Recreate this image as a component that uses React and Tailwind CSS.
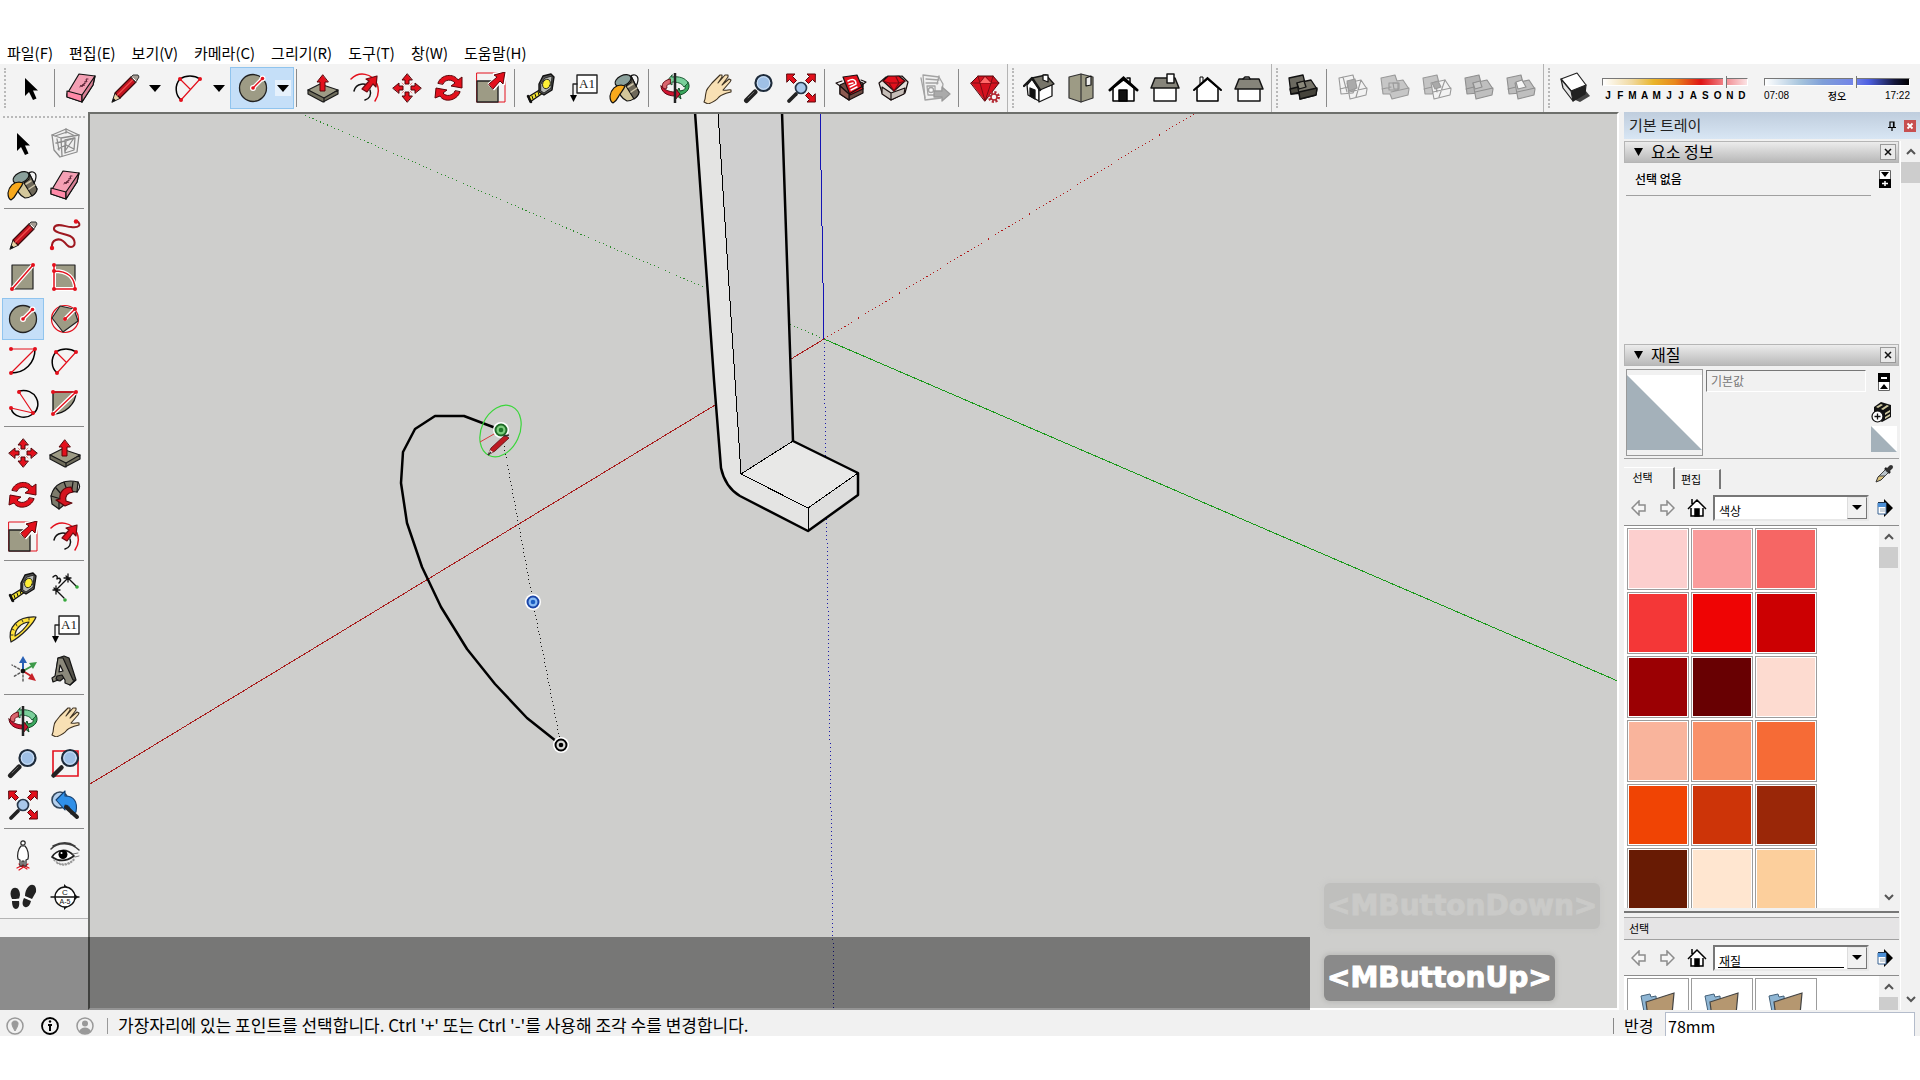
import React from "react";

const RED = "#e3101c";
const TAUPE = "#9d9b85";

function Icon({ children, size = "size-8" }) {
  return (
    <svg viewBox="0 0 32 32" className={`${size} shrink-0`} fill="none" strokeLinecap="round" strokeLinejoin="round" aria-hidden="true">
      {children}
    </svg>
  );
}

const Dot = ({ x, y, r = 2 }) => <circle cx={x} cy={y} r={r} fill={RED} />;

const icons = {
  select: (
    <path d="M10 6v18l4-4 4 8 3.5-1.5-3.5-8h5z" fill="#000" />
  ),
  eraser: (
    <g stroke="#111" strokeWidth="1.2">
      <path d="M2 22 14 2l16 2-2 9-11 17-15-5z" fill="#f4a0b4" />
      <path d="m2 19 15 4 0 7-15-5z" fill="#ff8aa8" />
      <path d="m17 23 13-19-2 9-11 17z" fill="#d88095" />
      <path d="m15 15 1-2 1 2 1-3 1 2 0-3 1 1 0-3 2 1-1-3 2 0" stroke="#5c2536" strokeWidth="1" />
    </g>
  ),
  pencil: (
    <g>
      <path d="m3 30 3-9 5 5z" fill="#e8d3a4" stroke="#222" strokeWidth="1" />
      <path d="m3 30 1.500-4 2.500 2.500z" fill="#111" />
      <path d="M6 21 22 5l5 5-16 16z" fill="#c3131f" stroke="#3a0a0c" strokeWidth="1.200" />
      <path d="M8.500 23 24.500 7" stroke="#ee4b4b" strokeWidth="1.400" />
      <path d="m22 5 2-2 5 0 1 2-3 5z" fill="#a59c93" stroke="#333" strokeWidth="1" />
      <path d="m24 6 3 3" stroke="#fff" strokeWidth="1" />
    </g>
  ),
  arc: (
    <g>
      <path d="M8 28A15 15 0 0 1 7 7 16 14 0 0 1 27 7" stroke="#000" strokeWidth="1.500" />
      <path d="m7 7 10 10M8 28 27 7" stroke={RED} strokeWidth="1.200" />
      <Dot x={7} y={7} /><Dot x={27} y={7} /><Dot x={8} y={28} />
    </g>
  ),
  circle: (
    <g>
      <circle cx="16" cy="16" r="13.500" fill={TAUPE} stroke="#222" strokeWidth="1.300" />
      <path d="m16 16 9-9" stroke="#fff" strokeWidth="4" />
      <circle cx="16" cy="16" r="3" fill="#fff" /><circle cx="25.500" cy="6.500" r="3" fill="#fff" />
      <path d="m16 16 9-9" stroke={RED} strokeWidth="1.400" />
      <Dot x={16} y={16} r={1.800} /><Dot x={25.500} y={6.500} r={1.800} />
    </g>
  ),
  pushPull: (
    <g stroke="#1b1b1b" strokeWidth="1.200">
      <path d="m1 18 12-6 18 6-14 9z" fill={TAUPE} />
      <path d="M1 18v4l15 8 15-8v-4l-14 8z" fill="#6f6d5c" />
      <path d="M17 26v4" />
      <path d="M15.500 3 10 10h3v9h5v-9h3z" fill={RED} stroke="#5b0509" strokeWidth="1" />
    </g>
  ),
  offset: (
    <g>
      <path d="M2 7C10-1 23 1 28 12c2 5 2 11-2 17" stroke={RED} strokeWidth="1.500" />
      <path d="M5 19c2-8 12-9 16-3M21 18c2 5-1 9-5 10" stroke="#111" strokeWidth="1.500" />
      <path d="M13 17 20 9l-3-2 11-3-1 11-3-3-6 8z" fill={RED} stroke="#6b0a10" strokeWidth="1.200" />
    </g>
  ),
  move: (
    <g fill={RED} stroke="#4f0508" strokeWidth="1">
      <path d="m16 2-5 6h3v4h4V8h3zM16 30l-5-6h3v-4h4v4h3zM2 16l6-5v3h4v4H8v3zM30 16l-6-5v3h-4v4h4v3z" />
      <path d="m11 11 2 2M21 11l-2 2M11 21l2-2M21 21l-2-2" stroke="#e88" />
    </g>
  ),
  rotate: (
    <g fill={RED} stroke="#5b0509" strokeWidth="1">
      <path d="M5 11C8 2 21 1 25 8l4-3v11l-11-2 4-3c-3-4-10-4-12 1z" />
      <path d="M27 20c-3 9-16 11-20 4l-5 2 1-10 11 2-4 3c3 4 10 3 12-2z" />
    </g>
  ),
  scale: (
    <g>
      <path d="M2 1h28v29H2z" stroke={RED} strokeWidth="1" />
      <path d="M2 9h21v21H2z" fill={TAUPE} stroke="#222" strokeWidth="1.400" />
      <path d="m14 12 8-7-3-3 12-2-2 12-3-3-7 8z" fill={RED} stroke="#fff" strokeWidth="2.500" />
      <path d="m14 12 8-7-3-2 11-3-2 12-3-3-7 8z" fill={RED} stroke="#5b0509" strokeWidth="1" />
    </g>
  ),
  tape: (
    <g stroke="#111">
      <path d="m3 25 13-8 2 4-13 9z" fill="#f3e332" strokeWidth="1.200" />
      <path d="m7 24 1 3M10 22l1 3M13 20l1 3" strokeWidth="1" />
      <path d="m3 24 3 6" strokeWidth="2.500" />
      <path d="M14 12 18 4l8-2 3 3-2 13-8 5-5-3z" fill="#555" strokeWidth="1.400" />
      <path d="m16 12 4-6 7-2-1 12-7 5-3-2z" fill="#b9bcb8" strokeWidth=".8" />
      <ellipse cx="21.500" cy="12" rx="3.800" ry="4.800" fill="#fff036" strokeWidth=".8" transform="rotate(20 21.500 12)" />
    </g>
  ),
  label: (
    <g>
      <path d="M10 3h20v18H10z" fill="#fff" stroke="#222" strokeWidth="1.400" />
      <path d="M10 12H6v12" stroke="#222" strokeWidth="1.300" />
      <path d="M3 23h7l-3.500 7z" fill="#000" />
      <text x="20" y="16" textAnchor="middle" fontSize="13" fill="#222" fontFamily="Liberation Serif, serif">A1</text>
    </g>
  ),
  bucket: (
    <g stroke="#111" strokeWidth="1.200">
      <path d="M21 5c3-4 8-2 8 2 0 4-1 6-3 8" strokeWidth="1.200" />
      <path d="M7 12 22 4l8 16c-1 5-7 9-12 9-5-2-9-9-11-17z" fill="#d3c79b" />
      <path d="m22 4 8 16c0 3-2 5-5 7l-8-13 5-4z" fill="#6e6859" />
      <path d="m19 15 5-3M22 20l6-4" stroke="#cfc6aa" strokeWidth="1.500" />
      <ellipse cx="14" cy="8.500" rx="8.500" ry="5" fill="#8aa09b" transform="rotate(-26 14 8.500)" />
      <path d="M12 13C7 13 2 17 1 24c0 3 1 6 3 7 4-2 5-6 7-9 2-3 4-5 5-8z" fill="#f8a91c" />
    </g>
  ),
  orbit: (
    <g strokeWidth="1">
      <path d="M29 10c3 5 0 11-8 13l1 4-6-5 4-6 1 3c6-1 6-3 4-7z" fill="#3aa85d" stroke="#114a26" />
      <path d="M13 5c7-1 14 1 16 6l-4 4c-2-4-7-5-12-5l0 3-5-4 5-6z" fill="#79cf9a" stroke="#1d5a35" />
      <path d="M11 7C4 9 2 12 4 18l4-2c-1-3 1-4 3-4z" fill="#d9656d" stroke="#6b1018" />
      <path d="M2 14c0 6 6 10 14 10l0 4 5-6-5-6v4c-6 0-10-2-14-6z" fill="#cf1330" stroke="#5b0912" />
      <path d="M16 1v30" stroke="#222" strokeWidth="2.500" strokeLinecap="butt" />
    </g>
  ),
  pan: (
    <path d="M3 30c3-6 0-10 4-14l4-5 8-8 2 0 0 2-4 6L24 3l3 0 0 2-6 8 7-6 2 1-1 2-7 8c3 1 7-1 8 0l0 2c-4 1-9 2-12 5-3 4-8 6-11 7z" fill="#f8e0b4" stroke="#3c3020" strokeWidth="1.100" />
  ),
  zoom: (
    <g>
      <path d="M3.500 28.500 12 20" stroke="#222" strokeWidth="5" />
      <path d="m5 26 6-6" stroke="#666" strokeWidth="1" />
      <circle cx="20.500" cy="11" r="8" fill="#9fc0e6" stroke="#1e2b3a" strokeWidth="2.200" />
      <circle cx="20.500" cy="11" r="6.200" stroke="#cfe0f5" strokeWidth="1" />
    </g>
  ),
  extents: (
    <g>
      <path d="M4 29 11 22" stroke="#222" strokeWidth="3.800" />
      <circle cx="16" cy="16" r="5.500" fill="#a9c8ea" stroke="#27374a" strokeWidth="1.700" />
      <g fill={RED} stroke="#5b0509" strokeWidth="1">
        <path d="M2 2h8L7.500 4.500l4 4-3 3-4-4L2 10zM30 2h-8l2.500 2.500-4 4 3 3 4-4L30 10zM30 30h-8l2.500-2.500-4-4 3-3 4 4L30 22z" />
      </g>
    </g>
  ),
  warehouse: (
    <g stroke="#1a1010" strokeWidth="1.200">
      <path d="m5 13 13-6 10 4v10l-14 7-9-6z" fill="#6d4a42" />
      <path d="m8 5 14-2 6 14-13 6z" fill={RED} />
      <path d="M13 9c5-3 8-1 8 3l-6 3M14 12l4-1M16 18l6-3" stroke="#fff" strokeWidth="1.500" />
      <path d="m5 14-4-3 6-2M27 13l4-3-5-2M14 28v-6l-9-8M14 22l14-8" />
      <path d="m5 14 9 8v6l-9-6z" fill="#8c5a51" />
    </g>
  ),
  extensionStore: (
    <g stroke="#1a1010" strokeWidth="1.200">
      <path d="m2 11 7-6 16-1 6 6-3 11-14 7-9-7z" fill="#e4dfda" />
      <path d="m6 9 5-5 11 0 6 5-11 10z" fill={RED} />
      <path d="m6 9 6 2 10 0 6-2M12 11l5 8 5-8-3-6" stroke="#7d0a12" />
      <path d="m5 15 9 6v7l-9-6zM14 21l14-5-1 6-13 6z" fill="#c6beb8" />
    </g>
  ),
  layoutSend: (
    <g stroke="#a3a3a3" strokeWidth="1.300">
      <path d="m4 3 16 2 4 7-2 14-16 2z" fill="#f0f0f0" />
      <path d="m7 7 13 1M7 11h12M2 6l4 20M20 4l-2 8" />
      <path d="M8 14h8v9H9z" fill="#f8f8f8" /><circle cx="12" cy="18" r="2.500" />
      <path d="M15 19h8v-4l8 7-8 7v-4h-8z" fill="#aaa" stroke="#999" />
    </g>
  ),
  gem: (
    <g>
      <path d="M2 11 9 4h15l6 7-14 18z" fill="#d5121f" stroke="#4e080c" strokeWidth="1" />
      <path d="M2 11h28M9 4l2 7 5 18 6-18 2-7M11 11l5-7 6 7" stroke="#7c0c14" strokeWidth="1" />
      <path d="m11 11 5-6 6 6z" fill="#ff6a6a" />
      <circle cx="25" cy="25" r="4.500" fill="#f3f3f3" stroke="#b22831" strokeWidth="3" strokeDasharray="2 1.500" strokeLinecap="butt" />
      <circle cx="25" cy="25" r="3" stroke="#b22831" strokeWidth="1.500" />
    </g>
  ),
  viewIso: (
    <g stroke="#151515" strokeWidth="1.300">
      <path d="m4 13 5-6 7 10v12l-11-6z" fill="#fff" />
      <path d="m16 17 13-4v11l-13 6z" fill="#fff" />
      <path d="m9 6 14-3 8 9-14 6z" fill="#77756a" />
      <path d="M1 14 9 6l8 12" strokeWidth="2.400" />
      <path d="M20 3h5v7l-5-2z" fill="#fff" />
      <path d="m7 16 5 2v9l-5-3z" fill="#111" />
    </g>
  ),
  viewTop: (
    <g stroke="#333" strokeWidth="1.200">
      <path d="m4 5 12-3 12 3v21l-12 4-12-4z" fill={TAUPE} />
      <path d="M16 2v28" />
      <path d="m21 6 5-2v9l-5 1z" fill="#eee" stroke="#111" />
    </g>
  ),
  viewFront: (
    <g stroke="#000" strokeWidth="1.500">
      <path d="M6 16v13h21V16L16.500 8z" fill="#fff" />
      <path d="M20 6h3v5" />
      <path d="M3 18 16.500 6 30 18" strokeWidth="3" strokeLinejoin="miter" />
      <path d="M12 18h8v11h-8z" fill="#111" />
    </g>
  ),
  viewRight: (
    <g stroke="#151515" strokeWidth="1.500">
      <path d="M5 14h22v15H5z" fill="#fff" />
      <path d="M6 6h20l4 10H2z" fill="#86847a" />
      <path d="M18 2h7v9h-7z" fill="#fff" />
    </g>
  ),
  viewBack: (
    <g stroke="#000" strokeWidth="1.500">
      <path d="M6 16v13h21V16L16.500 7z" fill="#fff" />
      <path d="M9 12V5h3v4" fill="#fff" strokeWidth="1" />
      <path d="M3 18 16.500 6 30 18" strokeWidth="2" strokeLinejoin="miter" />
    </g>
  ),
  viewLeft: (
    <g stroke="#151515" strokeWidth="1.500">
      <path d="M5 16h22v13H5z" fill="#fff" />
      <path d="M6 7h20l4 10H2z" fill="#86847a" />
      <path d="M10 7 12 5h4l1 2" />
    </g>
  ),
  outerShell: (
    <g stroke="#111" strokeWidth="1.300">
      <path d="m2 6 14-3 3 12-3 6-12 1z" fill="#6b6960" />
      <path d="m3 17 12-3v6l-11 2z" fill="#4a483f" />
      <path d="m10 11 14-3 6 9-1 6-16 4z" fill="#77756a" />
      <path d="m12 20 18-4-1 7-16 4z" fill="#45433b" />
      <path d="m10 11 7-2 2 6-7 2z" fill="#8a887a" />
    </g>
  ),
  intersect: (
    <g stroke="#999" strokeWidth="1.100">
      <path d="m2 6 14-3 3 12-3 6-12 1zM3 17l12-3v6M10 11l14-3 6 9-1 6-16 4zM12 20l18-4M6 5l4 15M24 8l-5 17" />
      <path d="m10 9 8-2 2 9-8 3z" fill="#aaa" />
    </g>
  ),
  union: (
    <g stroke="#999" strokeWidth="1.100">
      <path d="m2 6 14-3 2 6 6-1 6 9-1 6-16 4-2-5-7 0z" fill="#c6c6c6" />
      <path d="m3 17 9-2M12 20l18-4M10 11h9v7h-9z" /><path d="m14 11 6 0v6h-5z" />
    </g>
  ),
  subtract: (
    <g stroke="#999" strokeWidth="1.100">
      <path d="m2 6 14-3 3 12-8 7-7 0z" fill="#c4c4c4" />
      <path d="m10 11 14-3 6 9-1 6-16 4z" fill="#f3f3f3" /><path d="M12 20l18-4M3 17l8-2M24 8l-6 17M15 12l1 8" />
      <path d="m11 11 6-2 3 6-6 2z" fill="#aaa" />
    </g>
  ),
  trim: (
    <g stroke="#8f8f8f" strokeWidth="1.100">
      <path d="m2 6 14-3 3 12-3 6-12 1z" fill="#b4b4b4" />
      <path d="m3 17 12-3" />
      <path d="m10 11 14-3 6 9-1 6-16 4z" fill="#bfbfbf" /><path d="M12 20l18-4" />
      <path d="m10 11 7-2 2 6-7 2z" fill="#c8c8c8" />
    </g>
  ),
  split: (
    <g stroke="#8f8f8f" strokeWidth="1.100">
      <path d="m2 6 14-3 3 12-3 6-12 1z" fill="#bdbdbd" />
      <path d="m3 17 12-3" />
      <path d="m10 11 14-3 6 9-1 6-16 4z" fill="#bfbfbf" /><path d="M12 20l18-4" />
      <path d="m11 10 6-2 4 7-8 2z" fill="#f6f6f6" />
    </g>
  ),
  shadows: (
    <g stroke="#222" strokeWidth="1.200">
      <path d="m14 27 12-9 5 6-10 6z" fill="#444" stroke="none" />
      <path d="m12 19 15-6-1 9-12 7z" fill="#222" />
      <path d="m2 7 16-6 9 12-15 6z" fill="#fff" />
      <path d="m2 7 10 12 2 10-10-13z" fill="#e4e4e4" />
    </g>
  ),
  component: (
    <g stroke="#8d8d8d" strokeWidth="1.300">
      <path d="m3 8 14-6 13 6-2 17-17 5-6-7z" fill="#f0f0f0" />
      <path d="m3 8 9 3 18-3M12 11l1 18M6 9l12-4 8 4M17 2v4M8 12l2 11M16 13l10-2-1 12-9 3zM9 22l8-4 8 4M7 16l9-2" />
      <path d="m17 14 8-3-9 13z" />
    </g>
  ),
  freehand: (
    <g>
      <path d="M3 29C2 20 10 19 14 22c5 4 4 6 8 6 5 0 5-8-1-11-7-3-17-3-16-8 2-6 12-1 17-1 8 1 11-2 6-6" stroke="#9e1820" strokeWidth="2" />
      <Dot x={3} y={29} r={2.200} /><Dot x={27} y={2.500} r={2.200} />
    </g>
  ),
  rectangle: (
    <g>
      <path d="M5 4h21v24H5z" fill={TAUPE} stroke="#222" strokeWidth="1.200" />
      <path d="M5 28 26 4" stroke="#fff" strokeWidth="4" />
      <path d="M5 28 26 4" stroke={RED} strokeWidth="1.500" />
      <Dot x={5} y={28} /><Dot x={26} y={4} />
    </g>
  ),
  rotatedRect: (
    <g>
      <path d="M5 4h21v24H5z" fill={TAUPE} stroke="#222" strokeWidth="1.200" />
      <path d="M5 4v24h21C26 17 19 10 5 10" stroke="#fff" strokeWidth="4" />
      <path d="M5 4v24h21C26 17 19 10 5 10" stroke={RED} strokeWidth="1.500" />
      <Dot x={5} y={4} /><Dot x={5} y={28} /><Dot x={26} y={28} /><Dot x={5} y={10} />
    </g>
  ),
  polygon: (
    <g>
      <circle cx="16" cy="16" r="13.500" stroke={RED} strokeWidth="1.200" />
      <path d="m3 15 8-12 14 3 4 12-15 11z" fill={TAUPE} stroke="#222" strokeWidth="1.200" />
      <path d="m16 16 9-9" stroke="#fff" strokeWidth="4" />
      <path d="m16 16 9-9" stroke={RED} strokeWidth="1.400" />
      <Dot x={16} y={16} /><Dot x={26} y={6} />
    </g>
  ),
  arc2: (
    <g>
      <path d="M28 4c0 14-10 24-24 24" stroke="#000" strokeWidth="1.500" />
      <path d="M4 4h24L4 28" stroke={RED} strokeWidth="1.200" />
      <Dot x={4} y={4} /><Dot x={28} y={4} /><Dot x={4} y={28} />
    </g>
  ),
  arc3: (
    <g>
      <path d="M12 4c16-4 25 14 14 23-8 6-20 3-22-6" stroke="#000" strokeWidth="1.500" />
      <path d="m12 5 14 21-22-5" stroke={RED} strokeWidth="1.200" />
      <Dot x={12} y={5} /><Dot x={26} y={26} /><Dot x={4} y={21} />
    </g>
  ),
  pie: (
    <g>
      <path d="M4 5h23c0 12-11 22-23 22z" fill={TAUPE} stroke="#111" strokeWidth="1.300" />
      <path d="M4 27 27 5" stroke="#fff" strokeWidth="4" />
      <path d="M4 5h23L4 27" stroke={RED} strokeWidth="1.400" />
      <Dot x={4} y={5} /><Dot x={27} y={5} /><Dot x={4} y={27} />
    </g>
  ),
  followMe: (
    <g stroke="#161616" strokeWidth="1.200">
      <path d="M29 3C17 0 5 4 2 17l1 8 7 5 5-4-2-7c2-6 9-7 15-6z" fill="#7d7b6c" />
      <path d="M29 3c2 3 2 7-1 10M24 3l-1 7M15 3l3 8M7 9l6 7M2 17l10 3M10 30l0-7" />
      <path d="M22 8c-7 0-12 5-11 12l-4 1 9 6 7-3-6-2c-1-5 1-8 7-9z" fill="#d4141f" stroke="#5b0509" />
    </g>
  ),
  dimension: (
    <g stroke="#111" strokeWidth="1.300">
      <path d="M7 19 19 7M7 19l8 8M19 7l8 8M4 19h7M7 15v8M15 7h7M19 3v8M5 17l5 5M17 5l5 5" />
      <path d="M4 6c3-3 5-1 4 2 3-2 5 1 2 4" strokeWidth="1.500" />
      <circle cx="16" cy="29" r="1.800" fill="#35a83b" stroke="none" /><circle cx="28" cy="16" r="1.800" fill="#35a83b" stroke="none" />
    </g>
  ),
  protractor: (
    <g stroke="#222" strokeWidth="1.200">
      <path d="M4 29C0 14 11 3 29 4c-2 6-14 19-25 25z" fill="#ffe23a" />
      <path d="M8 23c0-7 6-13 14-14-3 5-9 11-14 14z" fill="#f3f3f3" />
      <path d="m4 22 2 0M5 16l2 1M9 11l1 2M15 7l1 2M22 5v2" strokeWidth=".9" />
    </g>
  ),
  axes: (
    <g>
      <path d="M16 16v11M16 16 5 10M16 16 6 22" stroke="#555" strokeWidth="1.400" strokeDasharray="2 2" />
      <path d="M16 16V6" stroke="#2860b5" strokeWidth="2" /><path d="m12 8 4-7 4 7z" fill="#2860b5" />
      <path d="m16 16 9-5" stroke="#3d9a49" strokeWidth="2" /><path d="m22 8 8-1-4 7z" fill="#3d9a49" />
      <path d="m16 16 8 5" stroke="#c72128" strokeWidth="2" /><path d="m25 18 4 8-8-2z" fill="#c72128" />
      <circle cx="16" cy="16" r="2.300" fill="#111" />
    </g>
  ),
  text3d: (
    <g stroke="#151515" strokeWidth="1.200">
      <path d="m9 3 6-2 5 2 7 22-6 5-5-8-5 4-5-1z" fill="#55534a" />
      <path d="m3 23 3-2 3-18 5 0 10 22 2 0-5 5-5-2 0-3-3-5-5 1-1 3 2 1-5 2z" fill="#8b897b" />
      <path d="m11 10 3 6-4 1z" fill="#f3f3f3" />
    </g>
  ),
  zoomWindow: (
    <g>
      <path d="M4 4h25v25H4z" stroke={RED} strokeWidth="1.600" strokeLinejoin="miter" />
      <path d="m4.500 28.500 8-8" stroke="#222" strokeWidth="4.500" />
      <circle cx="21" cy="11" r="8" fill="#9fc0e6" stroke="#1e2b3a" strokeWidth="2.200" />
      <circle cx="21" cy="11" r="6.200" stroke="#cfe0f5" strokeWidth="1" />
    </g>
  ),
  previous: (
    <g>
      <circle cx="11" cy="11" r="8" fill="#b4d0ee" stroke="#33475c" strokeWidth="1.600" />
      <path d="m7 11 9-9v5c9 0 13 6 11 16l-5 2c-1-7-2-9-6-9v5z" fill="#3090e8" stroke="#123f70" strokeWidth="1.100" />
      <path d="m17 18 11 10" stroke="#222" strokeWidth="4" />
    </g>
  ),
  position: (
    <g>
      <path d="m10 29 6-3 6 3M12 25l8 5M21 25l-9 6" stroke={RED} strokeWidth="1.200" />
      <path d="M14 7c-3 3-4 9-3 13l2 1v6h2v-5h2v5h2v-6l2-1c1-4 0-10-3-13z" fill="#fff" stroke="#222" strokeWidth="1.200" />
      <circle cx="16" cy="4" r="2.200" fill="#fff" stroke="#222" strokeWidth="1.200" />
    </g>
  ),
  lookAround: (
    <g>
      <path d="M2 10C9 3 22 3 30 11M4 7c8-4 16-4 22 0" stroke="#3b3b3b" strokeWidth="1.500" />
      <path d="M3 18c5-8 15-9 22-1-7 5-15 6-22 1z" fill="#fff" stroke="#222" strokeWidth="1.700" />
      <circle cx="14" cy="15.500" r="4.500" fill="#000" /><circle cx="12.500" cy="14" r="1" fill="#fff" />
      <path d="M5 21c6 6 14 5 20-1M8 24c5 3 11 3 17-3" stroke="#999" strokeWidth="1.500" strokeDasharray="1 2" />
      <path d="M26 18l4-1M24 15l5-1" stroke="#777" />
    </g>
  ),
  walk: (
    <g fill="#222">
      <path d="M5 8c4-3 8 0 8 6l-1 4H5C3 14 3 11 5 8zM5 20h7c1 5-1 8-3 8-3 0-4-4-4-8z" />
      <path d="M22 5c4-3 8 0 7 6l-4 7-7-3c0-4 1-7 4-10zM17 17l7 3c-1 5-4 7-6 6-3-1-3-5-1-9z" />
      <path d="m5 19 7-1M17 16l8 3" stroke="#fff" />
    </g>
  ),
  section: (
    <g>
      <path d="m15 3 14 13-14 13" fill="#111" />
      <circle cx="16" cy="16" r="10" fill="#fff" stroke="#111" strokeWidth="1.400" />
      <path d="M2 16h28" stroke="#111" strokeWidth="1.400" />
      <text x="16" y="14" textAnchor="middle" fontSize="8" fill="#111" fontFamily="Liberation Sans, sans-serif">C</text>
      <text x="16" y="23" textAnchor="middle" fontSize="7" fill="#111" fontFamily="Liberation Sans, sans-serif">A-5</text>
    </g>
  ),
};

const menu = ["파일(F)", "편집(E)", "보기(V)", "카메라(C)", "그리기(R)", "도구(T)", "창(W)", "도움말(H)"];

function Tool({ name, active }) {
  return (
    <button
      type="button"
      aria-label={name}
      className={`grid size-[42px] shrink-0 place-items-center border ${active ? "border-[#90c4ee] bg-[#c5dff8]" : "border-transparent"}`}
    >
      <Icon>{icons[name]}</Icon>
    </button>
  );
}

function SplitTool({ name, active }) {
  return (
    <div className={`flex w-16 shrink-0 items-center border ${active ? "border-[#90c4ee] bg-[#c5dff8]" : "border-transparent"}`}>
      <button type="button" aria-label={name} className="grid h-10 w-11 place-items-center">
        <Icon>{icons[name]}</Icon>
      </button>
      <button type="button" aria-label={`${name} options`} className={`grid h-4 w-4 place-items-center ${active ? "bg-[#e6f1fc]" : ""}`}>
        <svg viewBox="0 0 12 7" className="h-[7px] w-3" aria-hidden="true"><path d="M0 0h12L6 7z" /></svg>
      </button>
    </div>
  );
}

const Sep = () => <div className="mr-[5px] ml-[2px] h-[38px] w-px shrink-0 bg-[#8a8a8a]" />;
const RowSep = () => <div className="mt-[2px] mr-[2px] mb-[5px] ml-[2px] h-px bg-[#8a8a8a]" />;
const Grip = () => <div className="mx-1 h-10 w-0 shrink-0 border-l-2 border-dotted border-[#b9b9b9]" />;

const GroupEnd = () => (
  <div className="flex h-full w-3 shrink-0 items-center pl-px">
    <div className="h-full w-px bg-[#b4b4b4]" />
    <Grip />
  </div>
);

const range =
  "block h-2 w-full appearance-none border border-t-[#777] border-r-white border-b-white border-l-[#777] [&::-webkit-slider-thumb]:h-3 [&::-webkit-slider-thumb]:w-1 [&::-webkit-slider-thumb]:appearance-none [&::-webkit-slider-thumb]:border-r [&::-webkit-slider-thumb]:border-[#777] [&::-webkit-slider-thumb]:bg-[#f3f3f3]";

function MainToolbar() {
  return (
    <div className="flex h-12 items-center overflow-hidden bg-[#f3f3f3]" role="toolbar">
      <div className="w-[10px] shrink-0"><Grip /></div>
      <Tool name="select" />
      <Sep />
      <Tool name="eraser" />
      <SplitTool name="pencil" />
      <SplitTool name="arc" />
      <SplitTool name="circle" active />
      <Sep />
      {["pushPull", "offset", "move", "rotate", "scale"].map((n) => <Tool key={n} name={n} />)}
      <Sep />
      {["tape", "label", "bucket"].map((n) => <Tool key={n} name={n} />)}
      <Sep />
      {["orbit", "pan", "zoom", "extents"].map((n) => <Tool key={n} name={n} />)}
      <Sep />
      {["warehouse", "extensionStore", "layoutSend"].map((n) => <Tool key={n} name={n} />)}
      <Sep />
      <Tool name="gem" />
      <GroupEnd />
      {["viewIso", "viewTop", "viewFront", "viewRight", "viewBack", "viewLeft"].map((n) => <Tool key={n} name={n} />)}
      <GroupEnd />
      <Tool name="outerShell" />
      <Sep />
      {["intersect", "union", "subtract", "trim", "split"].map((n) => <Tool key={n} name={n} />)}
      <GroupEnd />
      <Tool name="shadows" />
      <div className="flex min-w-0 flex-1 gap-4 pt-1 pr-[10px] pl-[6px] font-['Liberation_Sans',sans-serif] text-[10px] leading-3 text-black">
        <div className="flex-1">
          <input type="range" aria-label="날짜" min="0" max="100" defaultValue="86" className={`${range} bg-[linear-gradient(90deg,#fff,#f0d9a0_20%,#e9b52a_35%,#e8871c_50%,#df1414_68%,#f0848a_84%,#fbe3e4)]`} />
          <div className="mt-1 grid grid-cols-12 text-center font-bold">
            {"JFMAMJJASOND".split("").map((m, i) => <span key={i}>{m}</span>)}
          </div>
        </div>
        <div className="flex-1">
          <input type="range" aria-label="시간" min="0" max="100" defaultValue="63" className={`${range} bg-[linear-gradient(90deg,#fff,#a5c3dc_25%,#7f9fd8_40%,#7283e8_62%,#4d5fe0_72%,#15183c_90%,#000)]`} />
          <div className="mt-1 flex justify-between">
            <span>07:08</span>
            <span className="font-['Noto_Sans_CJK_KR',sans-serif] font-medium">정오</span>
            <span>17:22</span>
          </div>
        </div>
      </div>
    </div>
  );
}

const palette = [
  [["select", "component"], ["bucket", "eraser"]],
  [["pencil", "freehand"], ["rectangle", "rotatedRect"], ["circle", "polygon"], ["arc2", "arc"], ["arc3", "pie"]],
  [["move", "pushPull"], ["rotate", "followMe"], ["scale", "offset"]],
  [["tape", "dimension"], ["protractor", "label"], ["axes", "text3d"]],
  [["orbit", "pan"], ["zoom", "zoomWindow"], ["extents", "previous"]],
  [["position", "lookAround"], ["walk", "section"]],
];

function SideToolbar() {
  return (
    <div className="w-[88px] shrink-0 bg-[#f1f1f1]" role="toolbar">
      <div className="border-b border-[#b4b4b4] bg-[#f4f4f4] px-[2px]">
        <div className="flex h-[10px] items-center px-px">
          <div className="h-0 w-full border-t-2 border-dotted border-[#b9b9b9]" />
        </div>
        {palette.map((group, g) => (
          <div key={g}>
            {g > 0 && <RowSep />}
            <div className="grid grid-cols-[42px_42px]">
              {group.flat().map((n) => <Tool key={n} name={n} active={n === "circle"} />)}
            </div>
          </div>
        ))}
      </div>
    </div>
  );
}

function Snap({ x, y, ring, fill, core }) {
  return (
    <g>
      <circle cx={x} cy={y} r="8" fill="#fff" />
      <circle cx={x} cy={y} r="5.500" fill={fill} stroke={ring} strokeWidth="2" />
      <circle cx={x} cy={y} r="2.300" fill={core} />
    </g>
  );
}

function Viewport() {
  return (
    <div className="min-w-0 flex-1 border-2 border-t-[#6d6f6b] border-r-white border-b-white border-l-[#6d6f6b] bg-[#cececc]">
      <svg viewBox="90 114 1527 894" preserveAspectRatio="xMidYMid slice" className="block h-full w-full" fill="none" role="img" aria-label="3D 모델">
        <g strokeWidth="1" shapeRendering="crispEdges">
          <path d="M824 339 1194 114" stroke="#b01818" strokeDasharray="1 3" />
          <path d="M824 339 302 114" stroke="#2b8a2b" strokeDasharray="1 3" />
          <path d="M824 339 834 1010" stroke="#1b1ba8" strokeDasharray="1 3" />
          <path d="M824 339 90 784" stroke="#a81c1c" />
          <path d="m824 339 796 343" stroke="#1a9a1a" />
          <path d="m820 112 4 227" stroke="#1414b4" />
        </g>
        <path d="M695 112 714 380l7 88c3 14 9 22 19 28l68 35 50-36v-22l-65-32-2-61-9-268z" fill="#e4e4e3" />
        <path d="M718 112 735 380l6 94 52-33-2-61-9-268z" fill="#cfcfcf" />
        <path d="m741 474 52-33 65 32-50 35z" fill="#e8e8e7" />
        <path d="m808 508 50-35v22l-50 36z" fill="#dededd" />
        <path d="M718 112 735 380l6 94 67 34v23M741 474l52-33M808 508l50-35" stroke="#000" strokeWidth="1" shapeRendering="crispEdges" />
        <path d="M695 112 714 380l7 88c3 14 9 22 19 28l68 35 50-36v-22l-65-32-2-61-9-268" stroke="#000" strokeWidth="2.500" strokeLinejoin="round" />
        <path d="m501 430 32 172 28 143" stroke="#111" strokeDasharray="1 3" strokeWidth="1" shapeRendering="crispEdges" />
        <path d="m501 430-8-3-29-11h-29l-20 13-12 23-2 31 6 40 15 44 19 40 26 42 28 35 32 34 34 27" stroke="#000" strokeWidth="2.500" strokeLinejoin="round" />
        <ellipse cx="500.500" cy="431" rx="19" ry="27" transform="rotate(25 500.500 431)" stroke="#3bd63b" strokeWidth="1.200" />
        <path d="m480 442 21-12" stroke="#d83a3a" />
        <Snap x={501} y={430} ring="#1e6b26" fill="#7fce7f" core="#1e7a2a" />
        <Snap x={533} y={602} ring="#1b46a8" fill="#8abcf5" core="#1d5fc4" />
        <Snap x={561} y={745} ring="#000" fill="#d8d8d6" core="#000" />
        <path d="m488 455 3-7 14-13 4 3-14 13z" fill="#bd1a22" stroke="#551013" strokeWidth=".8" />
        <path d="m488 455 2-5 3 2z" fill="#eee" />
        <path d="m488 455 3-3M504 436l5-1" stroke="#333" strokeWidth="1.500" />
      </svg>
    </div>
  );
}

function Chevron({ up }) {
  return (
    <svg viewBox="0 0 10 7" className="h-[7px] w-[10px]" fill="none" stroke="#555" strokeWidth="2" aria-hidden="true">
      <path d={up ? "m1 6 4-4 4 4" : "m1 1 4 4 4-4"} />
    </svg>
  );
}

function ScrollBar({ thumb = true, down = true, className = "" }) {
  return (
    <div className={`flex shrink-0 flex-col items-center bg-[#f1f1f1] ${className}`}>
      <button type="button" aria-label="위로" className="grid h-[21px] w-full shrink-0 place-items-center"><Chevron up /></button>
      {thumb && <div className="h-[21px] w-full shrink-0 bg-[#cdcdcd]" />}
      <div className="flex-1" />
      {down && <button type="button" aria-label="아래로" className="grid h-[21px] w-full shrink-0 place-items-center"><Chevron /></button>}
    </div>
  );
}

function PanelHeader({ title }) {
  return (
    <div className="flex h-[22px] shrink-0 items-center border border-[#b5b5b5] bg-linear-to-b from-[#ececec] to-[#b9b9b9] pr-[2px] pl-[9px]">
      <svg viewBox="0 0 9 8" className="h-2 w-[9px]" aria-hidden="true"><path d="M0 0h9L4.500 8z" /></svg>
      <h2 className="flex-1 pb-[3px] pl-2 text-base leading-5">{title}</h2>
      <button type="button" aria-label={`${title} 닫기`} className="grid size-4 place-items-center border border-[#999] bg-[#e9e9e9]">
        <svg viewBox="0 0 8 8" className="size-2" stroke="#111" strokeWidth="1.500" aria-hidden="true"><path d="m1 1 6 6M7 1 1 7" /></svg>
      </button>
    </div>
  );
}

const Triangle = () => (
  <svg viewBox="0 0 74 74" preserveAspectRatio="none" className="block h-full w-full" aria-hidden="true">
    <path d="M0 0h74v74H0z" fill="#fff" />
    <path d="M0 0v74h74z" fill="#a4b1ba" />
  </svg>
);

function NavRow({ label, value, underline }) {
  return (
    <div className="flex h-[35px] shrink-0 items-center pl-[7px]">
      <button type="button" aria-label="뒤로" className="mr-3 w-4">
        <svg viewBox="0 0 16 16" className="size-4" fill="#f6f6f6" stroke="#8c8c8c" strokeWidth="1.500"><path d="m1 8 7-7v4h6v6H8v4z" /></svg>
      </button>
      <button type="button" aria-label="앞으로" className="mr-3 w-4">
        <svg viewBox="0 0 16 16" className="size-4" fill="#f6f6f6" stroke="#8c8c8c" strokeWidth="1.500"><path d="M15 8 8 1v4H2v6h6v4z" /></svg>
      </button>
      <button type="button" aria-label="홈" className="mr-[6px] w-5">
        <svg viewBox="0 0 20 20" className="size-5" fill="#fff" stroke="#000" strokeWidth="1.500"><path d="M4 10v8h12v-8M1 11l9-9 9 9M5 6V1" /><path d="M8 11h4v7H8z" fill="#000" /></svg>
      </button>
      <div className="relative h-[26px] w-[156px] border-2 border-t-[#777] border-r-[#e8e8e8] border-b-[#e8e8e8] border-l-[#777] bg-white">
        <select aria-label={label} defaultValue={value} className="h-full w-full appearance-none bg-transparent pb-[3px] pl-1 text-xs leading-4 text-black">
          <option>{value}</option>
        </select>
        {underline && <div className="absolute bottom-px left-[3px] h-px w-[126px] bg-black" />}
        <div className="pointer-events-none absolute top-0 right-0 grid h-full w-5 place-items-center border border-t-[#e8e8e8] border-r-[#777] border-b-[#777] border-l-[#ddd] bg-[#f1f1f1]">
          <svg viewBox="0 0 10 5" className="h-[5px] w-[10px]"><path d="M0 0h10L5 5z" /></svg>
        </div>
      </div>
      <button type="button" aria-label="세부 정보" className="ml-[7px] w-5">
        <svg viewBox="0 0 20 20" className="size-5"><path d="M8 1v3H2v12h6v3l9-9z" fill="#000" /><path d="M2 5h8v11H2z" fill="#fff" stroke="#3b6494" /><path d="M2 5h8v4H2z" fill="#4b8fd6" /><path d="M4 11h5M4 13h5" stroke="#9ab" /></svg>
      </button>
    </div>
  );
}

const swatches = [
  "#fccfce", "#fa9c9c", "#f66664", "#f43737", "#ef0404", "#cc0002",
  "#9b0003", "#680002", "#fddbd0", "#f9b49c", "#f99169", "#f66b36",
  "#f04404", "#cd3408", "#9a2708", "#681b04", "#ffe6d0", "#fccf9c",
];

function Tray() {
  return (
    <aside className="flex w-[301px] shrink-0 flex-col bg-[#f1f1f1] pl-[5px] text-black">
      <div className="flex h-[27px] shrink-0 items-center bg-linear-to-b from-[#bfcddd] to-[#d8e6f4] pl-[5px] pr-1">
        <h1 className="flex-1 pb-[2px] text-[15px] leading-5 text-[#222]">기본 트레이</h1>
        <button type="button" aria-label="고정" className="mr-2">
          <svg viewBox="0 0 8 10" className="h-[10px] w-2" fill="none" stroke="#000" strokeWidth="1.200"><path d="M2 6V1h4v5M0 6.500h8M4 7v3M5.500 1v5" /></svg>
        </button>
        <button type="button" aria-label="닫기" className="grid size-3 place-items-center bg-[#c75050]">
          <svg viewBox="0 0 8 8" className="size-2" stroke="#fff" strokeWidth="1.800"><path d="m1.500 1.500 5 5M6.500 1.500l-5 5" /></svg>
        </button>
      </div>
      <div className="flex min-h-0 flex-1 pt-[2px]">
        <div className="flex w-[275px] shrink-0 flex-col overflow-hidden">
          <section className="h-[203px] shrink-0">
            <PanelHeader title="요소 정보" />
            <div className="flex h-8 items-center justify-between pr-2 pl-[11px]">
              <p className="text-xs font-medium">선택 없음</p>
              <svg viewBox="0 0 12 18" className="h-[18px] w-3" aria-hidden="true"><path d="M.5.500h11v17H.5z" fill="#fff" stroke="#666" /><path d="M2 2h8L6 7zM0 9h12v9H0z" /><path d="M3 13.500h6M6 11v5" stroke="#fff" strokeWidth="1.500" /></svg>
            </div>
            <div className="mr-7 ml-[2px] h-px bg-[#a0a0a0]" />
          </section>
          <section className="flex min-h-0 flex-1 flex-col">
            <PanelHeader title="재질" />
            <div className="flex h-[93px] shrink-0 items-start border-b border-[#a0a0a0] pt-[3px] pl-[2px]">
              <div className="h-[87px] w-[77px] border border-[#999] py-[5px]"><Triangle /></div>
              <input type="text" aria-label="재질 이름" defaultValue="기본값" disabled className="mt-px ml-[3px] h-[22px] w-40 border border-t-[#777] border-r-white border-b-white border-l-[#777] bg-[#f1f1f1] px-1 pb-[2px] text-xs text-[#777]" />
              <div className="flex flex-1 flex-col items-end pt-1 pr-[2px]">
                <svg viewBox="0 0 12 18" className="mr-[7px] h-[18px] w-3" aria-hidden="true"><path d="M.5.500h11v17H.5z" fill="#fff" stroke="#666" /><path d="M0 0h12v9H0zM2 16h8L6 11z" /><path d="M3 5h6" stroke="#fff" strokeWidth="2" /></svg>
                <button type="button" aria-label="재질 만들기" className="mt-[10px] mr-1 size-[22px]">
                  <svg viewBox="0 0 22 22" className="size-full"><path d="m3 6 7-5 10 3v12l-9 5-8-5z" fill="#111" /><path d="m5 6 5-3 2 1-5 3zM10 8l6-4 2 1-6 4zM14 12l5-3v2l-5 3zM14 16l5-3v2l-5 3z" fill="#cfc9a0" /><circle cx="6.500" cy="15.500" r="5.500" fill="#fff" stroke="#111" strokeWidth="1.200" /><path d="M3.500 15.500h6M6.500 12.500v6" stroke="#111" strokeWidth="1.300" /></svg>
                </button>
                <div className="mt-[3px] size-[26px]"><Triangle /></div>
              </div>
            </div>
            <div className="flex h-[31px] shrink-0 items-start pt-2 text-[11px] leading-4">
              <button type="button" className="h-[22px] w-[51px] border-t border-r-2 border-t-white border-r-[#777] pr-3 pb-1">선택</button>
              <button type="button" className="mt-[2px] h-5 w-[46px] border-t border-r-2 border-t-white border-r-[#777] pr-3 pb-[2px]">편집</button>
              <button type="button" aria-label="샘플 페인트" className="mr-1 -mt-1 ml-auto size-5">
                <svg viewBox="0 0 20 20" className="size-5"><path d="m1 19 2-5 8-8 3 3-8 8z" fill="#d9c27e" stroke="#333" /><path d="M4 13l7-7 3 3-4 4z" fill="#b9c3c9" stroke="#444" /><path d="m10 5 5 5" stroke="#222" strokeWidth="2.500" /><path d="m13 7 3-3" stroke="#333" strokeWidth="4" strokeLinecap="round" /></svg>
              </button>
            </div>
            <NavRow label="컬렉션" value="색상" />
            <div className="flex min-h-0 flex-1 border-t border-[#8c8c8c] pr-px">
              <div className="grid flex-1 grid-cols-[repeat(3,62px)] content-start gap-[2px] overflow-hidden bg-white pt-[2px] pl-[3px]">
                {swatches.map((c) => (
                  <button type="button" key={c} aria-label={c} className="size-[62px] border border-[#9c9c9c] bg-white p-px">
                    <span className="block size-full" style={{ backgroundColor: c }} />
                  </button>
                ))}
              </div>
              <ScrollBar className="w-[19px]" />
            </div>
            <div className="mt-[3px] h-[2px] shrink-0 bg-[#777]" />
            <div className="mt-1 flex h-[23px] shrink-0 items-center border-y border-[#a0a0a0] bg-[#e5e4e5] pb-[2px] pl-[5px] text-[11px] leading-4">선택</div>
            <NavRow label="보조 컬렉션" value="재질" underline />
            <div className="flex h-[35px] shrink-0 border-t border-[#8c8c8c] pr-px">
              <div className="grid flex-1 grid-cols-[repeat(3,62px)] content-start gap-[2px] overflow-hidden bg-white pt-[2px] pl-[3px]">
                {[1, 2, 3].map((n) => (
                  <button type="button" key={n} aria-label={`폴더 ${n}`} className="grid size-[62px] place-items-center border border-[#9c9c9c] bg-white">
                    <svg viewBox="0 0 36 34" className="h-[34px] w-9"><path d="m1 4 9-2 1 3 5-1 2 26H6z" fill="#8fb6d4" stroke="#44617a" /><path d="M6 10 34 1l-3 32H9z" fill="#b59770" stroke="#444" strokeWidth="1.200" /></svg>
                  </button>
                ))}
              </div>
              <ScrollBar down={false} className="w-[19px] overflow-hidden" />
            </div>
          </section>
        </div>
        <ScrollBar className="ml-px flex-1 border-l border-white" />
      </div>
    </aside>
  );
}

function KeyCaption({ children, faded }) {
  return (
    <kbd className={`block w-fit rounded-md px-[3px] pt-1 pb-[5px] font-['DejaVu_Sans',sans-serif] text-[28px] leading-[37px] font-bold [-webkit-text-stroke:1px_currentColor] ${faded ? "bg-[#bfbfbd] text-[#cacac8] shadow-[0_0_4px_3px_#cacac8]" : "bg-[#8a8a8a] text-white shadow-[0_0_4px_2px_#bcbcba]"}`}>
      {children}
    </kbd>
  );
}

function StatusBar() {
  return (
    <footer className="flex h-[26px] shrink-0 items-start bg-[#f1f1f1] text-base leading-5 text-black">
      <div className="flex w-[100px] shrink-0 items-center gap-[17px] pt-[7px] pl-[6px]">
        <svg viewBox="0 0 18 18" className="size-[18px]" fill="none" stroke="#999"><circle cx="9" cy="9" r="8" strokeWidth="1.500" /><path d="M9 14c-5-8-3-10 0-10s5 2 0 10z" fill="#999" /></svg>
        <svg viewBox="0 0 18 18" className="size-[18px]" fill="none" stroke="#000"><circle cx="9" cy="9" r="8" strokeWidth="1.800" /><path d="M9 7v7M7 8h4" strokeWidth="2" /><circle cx="9" cy="4.500" r="1.200" fill="#000" stroke="none" /></svg>
        <svg viewBox="0 0 18 18" className="size-[18px]" fill="none" stroke="#999"><circle cx="9" cy="9" r="8" strokeWidth="1.500" /><circle cx="9" cy="6.500" r="3" fill="#999" stroke="none" /><path d="M3 15c1-6 11-6 12 0l-6 2z" fill="#999" stroke="none" /></svg>
      </div>
      <div className="mt-2 mr-[10px] ml-[7px] h-4 w-px shrink-0 bg-[#999]" />
      <p className="min-w-0 flex-1 pt-[5px] text-[17px] leading-5 whitespace-nowrap">가장자리에 있는 포인트를 선택합니다. Ctrl '+' 또는 Ctrl '-'를 사용해 조각 수를 변경합니다.</p>
      <label className="flex shrink-0 items-start">
        <span className="mt-2 mr-[10px] h-4 w-px bg-[#888]" />
        <span className="w-[41px] pt-[5px]">반경</span>
        <input type="text" defaultValue="78mm" className="mt-[2px] mr-[5px] h-6 w-[250px] border border-b-0 border-[#b4bccb] bg-white px-[2px] pt-[2px] text-base leading-5" />
      </label>
    </footer>
  );
}

export default function App() {
  return (
    <div className="flex h-screen flex-col overflow-hidden bg-white pt-10 pb-11 font-['Noto_Sans_CJK_KR',sans-serif]">
      <nav className="flex h-6 shrink-0 items-center gap-4 pt-[2px] pl-[7px] text-[15px] leading-5 text-black">
        {menu.map((m) => <button type="button" key={m}>{m}</button>)}
      </nav>
      <MainToolbar />
      <main className="relative flex min-h-0 flex-1">
        <SideToolbar />
        <Viewport />
        <Tray />
        <div className="pointer-events-none absolute bottom-0 left-0 flex items-end gap-[14px]">
          <div className="h-[73px] w-[1310px] bg-black/42" />
          <div className="flex flex-col gap-[26px] pb-[9px]">
            <KeyCaption faded>&lt;MButtonDown&gt;</KeyCaption>
            <KeyCaption>&lt;MButtonUp&gt;</KeyCaption>
          </div>
        </div>
      </main>
      <StatusBar />
    </div>
  );
}
